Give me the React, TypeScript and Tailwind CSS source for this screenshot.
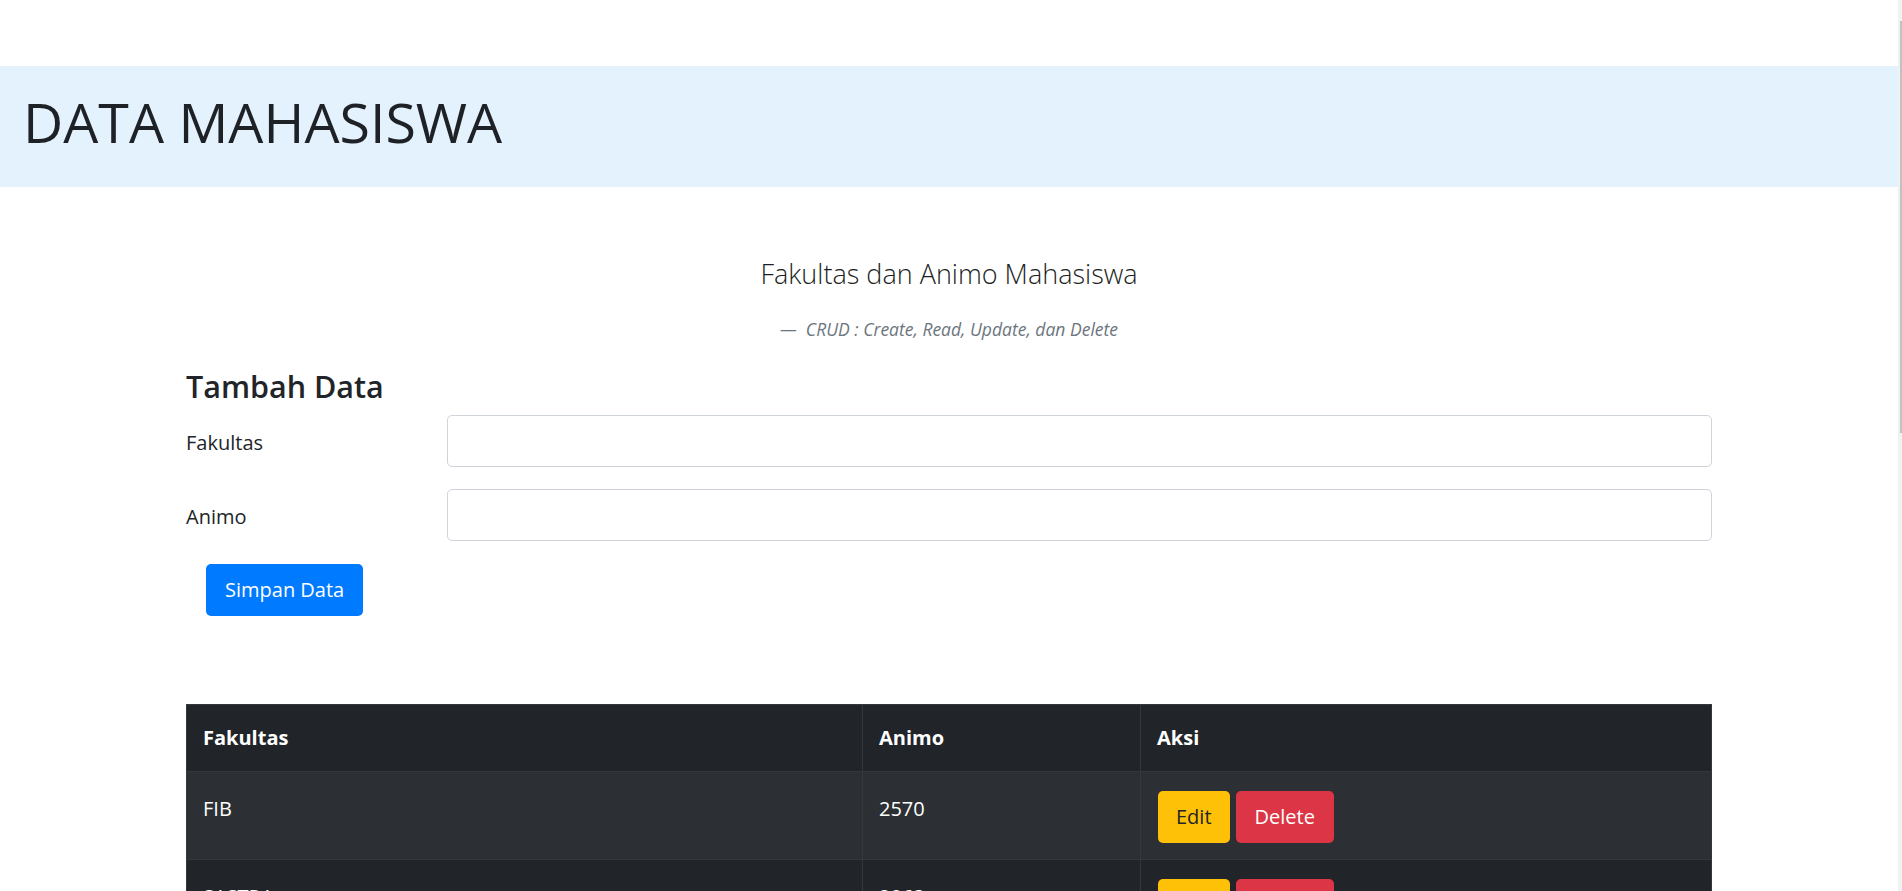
import React from 'react';

type Row = { fakultas: string; animo: number };

const rows: Row[] = [
    { fakultas: 'FIB', animo: 2570 },
    { fakultas: 'SASTRA', animo: 2863 },
    { fakultas: 'TEKNIK', animo: 3120 },
    { fakultas: 'EKONOMI', animo: 2945 },
    { fakultas: 'HUKUM', animo: 1980 },
    { fakultas: 'KEDOKTERAN', animo: 4210 },
    { fakultas: 'MIPA', animo: 2314 },
    { fakultas: 'FISIP', animo: 2650 },
    { fakultas: 'PSIKOLOGI', animo: 1875 },
    { fakultas: 'PERTANIAN', animo: 1540 },
];

const FormRow = ({ label, className }: { label: string; className?: string }) => (
    <div className={`flex items-center ${className ?? ''}`}>
        <label className="w-[261px] pt-[3px] text-[20px] leading-[30px] text-[#212529]">{label}</label>
        <input
            type="text"
            className="flex-1 h-[52px] rounded-[5px] border border-[#ced4da] bg-white px-4 text-[20px] outline-none"
        />
    </div>
);

export default function App() {
    return (
        <div className="flex h-screen overflow-hidden bg-white font-['Open_Sans',sans-serif] text-[#212529]">
            <div className="flex-1 overflow-hidden">
                <div className="pt-[66px]">
                    {/* Header */}
                    <div className="h-[121px] bg-[#e3f2fd] px-[23px] pt-[22px]">
                        <h1 className="text-[55.5px] leading-[67px] font-normal text-[#1e2226]">DATA MAHASISWA</h1>
                    </div>

                    <div className="mx-auto w-[1526px]">
                        {/* Title */}
                        <figure className="text-center">
                            <p className="mt-[66px] text-[27px] leading-[42px] font-light text-[#1c1f23]">Fakultas dan Animo Mahasiswa</p>
                            <figcaption className="mt-[21px] text-[17.5px] leading-[26px] italic text-[#6c757d]">
                                &mdash;&nbsp; CRUD : Create, Read, Update, dan Delete
                            </figcaption>
                        </figure>

                        {/* Form */}
                        <h2 className="mt-[25px] text-[30.5px] leading-[38px] font-semibold">Tambah Data</h2>
                        <FormRow label="Fakultas" className="mt-[10px]" />
                        <FormRow label="Animo" className="mt-[22px]" />
                        <button className="ml-[20px] mt-[23px] h-[52px] rounded-[5px] bg-[#007bff] px-[19px] text-[20px] text-white">
                            Simpan Data
                        </button>

                        {/* Table */}
                        <table className="mt-[88px] w-full border-collapse text-[20px] leading-[30px] text-white">
                            <thead>
                                <tr className="bg-[#212529]">
                                    <th className="w-[676px] border border-[#32383e] px-[16px] py-[18px] text-left font-bold">Fakultas</th>
                                    <th className="w-[278px] border border-[#32383e] px-[16px] py-[18px] text-left font-bold">Animo</th>
                                    <th className="border border-[#32383e] px-[16px] py-[18px] text-left font-bold">Aksi</th>
                                </tr>
                            </thead>
                            <tbody>
                                {rows.map((row, i) => (
                                    <tr key={row.fakultas} className={i % 2 === 0 ? 'bg-[#2c3034]' : 'bg-[#212529]'}>
                                        <td className="border border-[#32383e] px-[16px] pt-[22px] pb-[14px] align-top">{row.fakultas}</td>
                                        <td className="border border-[#32383e] px-[16px] pt-[22px] pb-[14px] align-top">{row.animo}</td>
                                        <td className="border border-[#32383e] px-[17px] pt-[19px] pb-[16px] align-top">
                                            <div className="flex gap-[6px]">
                                                <button className="h-[52px] rounded-[5px] bg-[#ffc107] px-[18px] text-[#212529]">Edit</button>
                                                <button className="h-[52px] rounded-[5px] bg-[#dc3545] px-[19px] text-white">Delete</button>
                                            </div>
                                        </td>
                                    </tr>
                                ))}
                            </tbody>
                        </table>
                    </div>
                </div>
            </div>

            {/* Scrollbar */}
            <div className="w-[4px] shrink-0 bg-[#f1f1f1] pt-[21px]">
                <div className="ml-[2px] h-[412px] w-[2px] bg-[#c1c1c1]" />
            </div>
        </div>
    );
}
